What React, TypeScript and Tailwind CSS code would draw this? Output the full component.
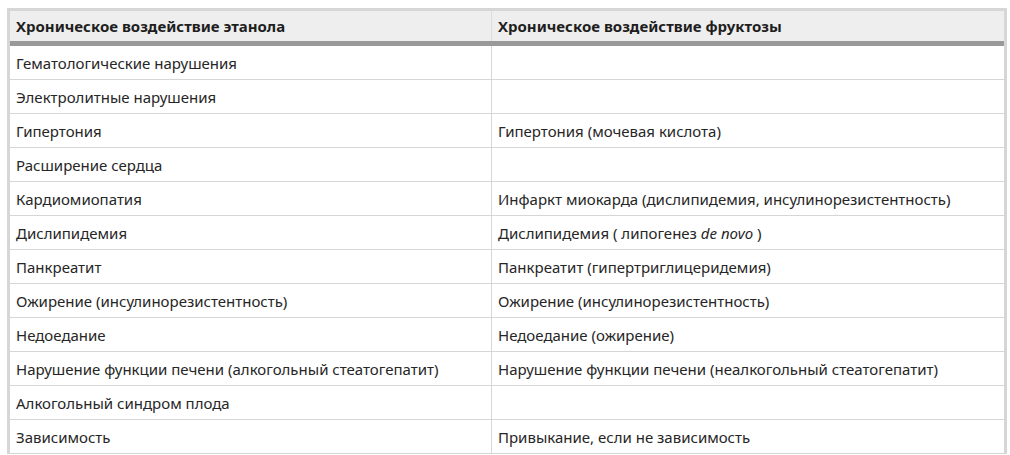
import React from 'react'

const rows: [React.ReactNode, React.ReactNode][] = [
  ['Гематологические нарушения', ''],
  ['Электролитные нарушения', ''],
  ['Гипертония', 'Гипертония (мочевая кислота)'],
  ['Расширение сердца', ''],
  ['Кардиомиопатия', 'Инфаркт миокарда (дислипидемия, инсулинорезистентность)'],
  [
    'Дислипидемия',
    <>
      Дислипидемия ( липогенез <i className="align-[4px] text-[15px]">de novo</i> )
    </>,
  ],
  ['Панкреатит', 'Панкреатит (гипертриглицеридемия)'],
  ['Ожирение (инсулинорезистентность)', 'Ожирение (инсулинорезистентность)'],
  ['Недоедание', 'Недоедание (ожирение)'],
  ['Нарушение функции печени (алкогольный стеатогепатит)', 'Нарушение функции печени (неалкогольный стеатогепатит)'],
  ['Алкогольный синдром плода', ''],
  ['Зависимость', 'Привыкание, если не зависимость'],
]

export default function App() {
  return (
    <div className="w-[1010px] h-[455px] overflow-hidden bg-white pl-[7px] pt-[8px] font-['Noto_Sans',sans-serif] text-[15px] text-[#262626]">
      <div className="w-[1000px] border-x-[3px] border-t-[3px] border-[#d6d6d6]">
        <div className="grid grid-cols-[482px_1fr] bg-[#eeeeee] border-b-[5px] border-[#999] h-[35px] font-bold text-[#1e1e1e]">
          <div className="px-[6px] pt-[1px] border-r border-[#dcdcdc] flex items-center">Хроническое воздействие этанола</div>
          <div className="px-[6px] pt-[1px] flex items-center">Хроническое воздействие фруктозы</div>
        </div>
        {rows.map(([a, b], i) => (
          <div key={i} className="grid grid-cols-[482px_1fr] h-[34px] border-b border-[#d6d6d6]">
            <div className="px-[6px] pt-[2px] border-r border-[#d6d6d6] flex items-center">{a}</div>
            <div className="px-[6px] pt-[2px] flex items-center whitespace-pre">{b}</div>
          </div>
        ))}
      </div>
    </div>
  )
}
